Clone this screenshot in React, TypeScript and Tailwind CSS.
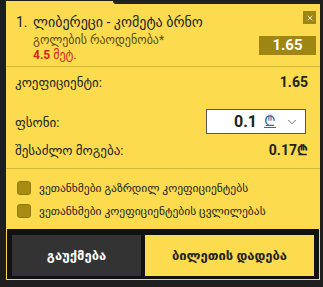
import React from 'react';
import { ChevronDown, X } from 'lucide-react';

const font = "font-['Roboto','DejaVu_Sans',sans-serif]";

const agreements = [
    'ვეთანხმები გაზრდილ კოეფიციენტებს',
    'ვეთანხმები კოეფიციენტების ცვლილებას',
];

const App: React.FC = () => {
    return (
        <div className={`w-[323px] h-[287px] bg-[#1e1e1e] pl-[6px] pt-[1px] ${font}`}>
            {/* tab strip on top */}
            <div className="flex w-[314px] h-[3px] bg-[#fcdc4e]">
                <div className="w-[107px]" />
                <div className="flex-1 bg-[#232323] rounded-bl-[5px]" />
            </div>

            <div className="w-[314px] h-[276px] bg-[#fcdc4e] flex flex-col">
                {/* bet header */}
                <div className="h-[63px] flex border-b border-[#d4b93c]">
                    <div className="flex-1 flex pl-[10px] pt-[8px] text-[#222]">
                        <span className="w-[17px] text-[14px] leading-[20px]">1.</span>
                        <div className="flex flex-col">
                            <span className="text-[14px] leading-[20px]">ლიბერეცი - კომეტა ბრნო</span>
                            <span className="text-[12px] leading-[15px] mt-[1px] text-[#5e4b10]">გოლების რაოდენობა*</span>
                            <span className="text-[12px] leading-[15px] text-[#d1261c]">
                                <b>4.5</b> მეტ.
                            </span>
                        </div>
                    </div>
                    <div className="flex flex-col items-end pr-[4px]">
                        <div className="mt-[7px] w-[13px] h-[13px] bg-[#9f8612] flex items-center justify-center">
                            <X size={8} strokeWidth={2.5} className="text-white" />
                        </div>
                        <div className="mt-[12px] w-[57px] h-[19px] bg-[#9f8612] flex items-center justify-center text-white font-bold text-[15px]">
                            1.65
                        </div>
                    </div>
                </div>

                {/* coefficient */}
                <div className="h-[31px] flex items-center justify-between pl-[9px] pr-[12px] text-[#222] text-[13px]">
                    <span>კოეფიციენტი:</span>
                    <span className="font-bold text-[14px]">1.65</span>
                </div>

                {/* stake */}
                <div className="flex flex-col pl-[9px] pr-[14px] pt-[11px] text-[#222] text-[13px]">
                    <div className="flex items-center justify-between h-[25px]">
                        <span className="mt-[2px]">ფსონი:</span>
                        <div className="w-[100px] h-[25px] bg-white border border-[#555] flex items-center justify-end pr-[6px]">
                            <span className="font-bold text-[16px]">0.1</span>
                            <span className="ml-[7px] text-[15px] leading-[15px] text-[#2a6db0] underline">₾</span>
                            <ChevronDown size={14} strokeWidth={1.5} className="ml-[9px] text-[#555]" />
                        </div>
                    </div>
                    <div className="flex items-center justify-between h-[33px]">
                        <span>შესაძლო მოგება:</span>
                        <span className="font-bold text-[14px] mr-[-2px]">0.17₾</span>
                    </div>
                </div>

                <div className="border-t border-[#d4b93c] mt-[1px]" />

                {/* agreements */}
                <div className="flex flex-col gap-[9px] pl-[11px] pt-[12px] h-[60px]">
                    {agreements.map(text => (
                        <label key={text} className="flex items-center gap-[8px] text-[11.5px] text-[#222] leading-[14px]">
                            <span className="w-[14px] h-[14px] rounded-[3px] bg-[#a88c12] border border-[#8e7711]" />
                            {text}
                        </label>
                    ))}
                </div>

                {/* actions */}
                <div className="mx-[1px] mb-[1px] flex-1 bg-[#111] flex gap-[4px] pl-[5px] pr-[5px] pt-[6px] pb-[3px]">
                    <button className="w-[129px] bg-[#333] text-white font-bold text-[13px] uppercase">
                        გაუქმება
                    </button>
                    <button className="flex-1 bg-[#fcdc4e] text-[#222] font-bold text-[13px] uppercase">
                        ბილეთის დადება
                    </button>
                </div>
            </div>
        </div>
    );
};

export default App;
